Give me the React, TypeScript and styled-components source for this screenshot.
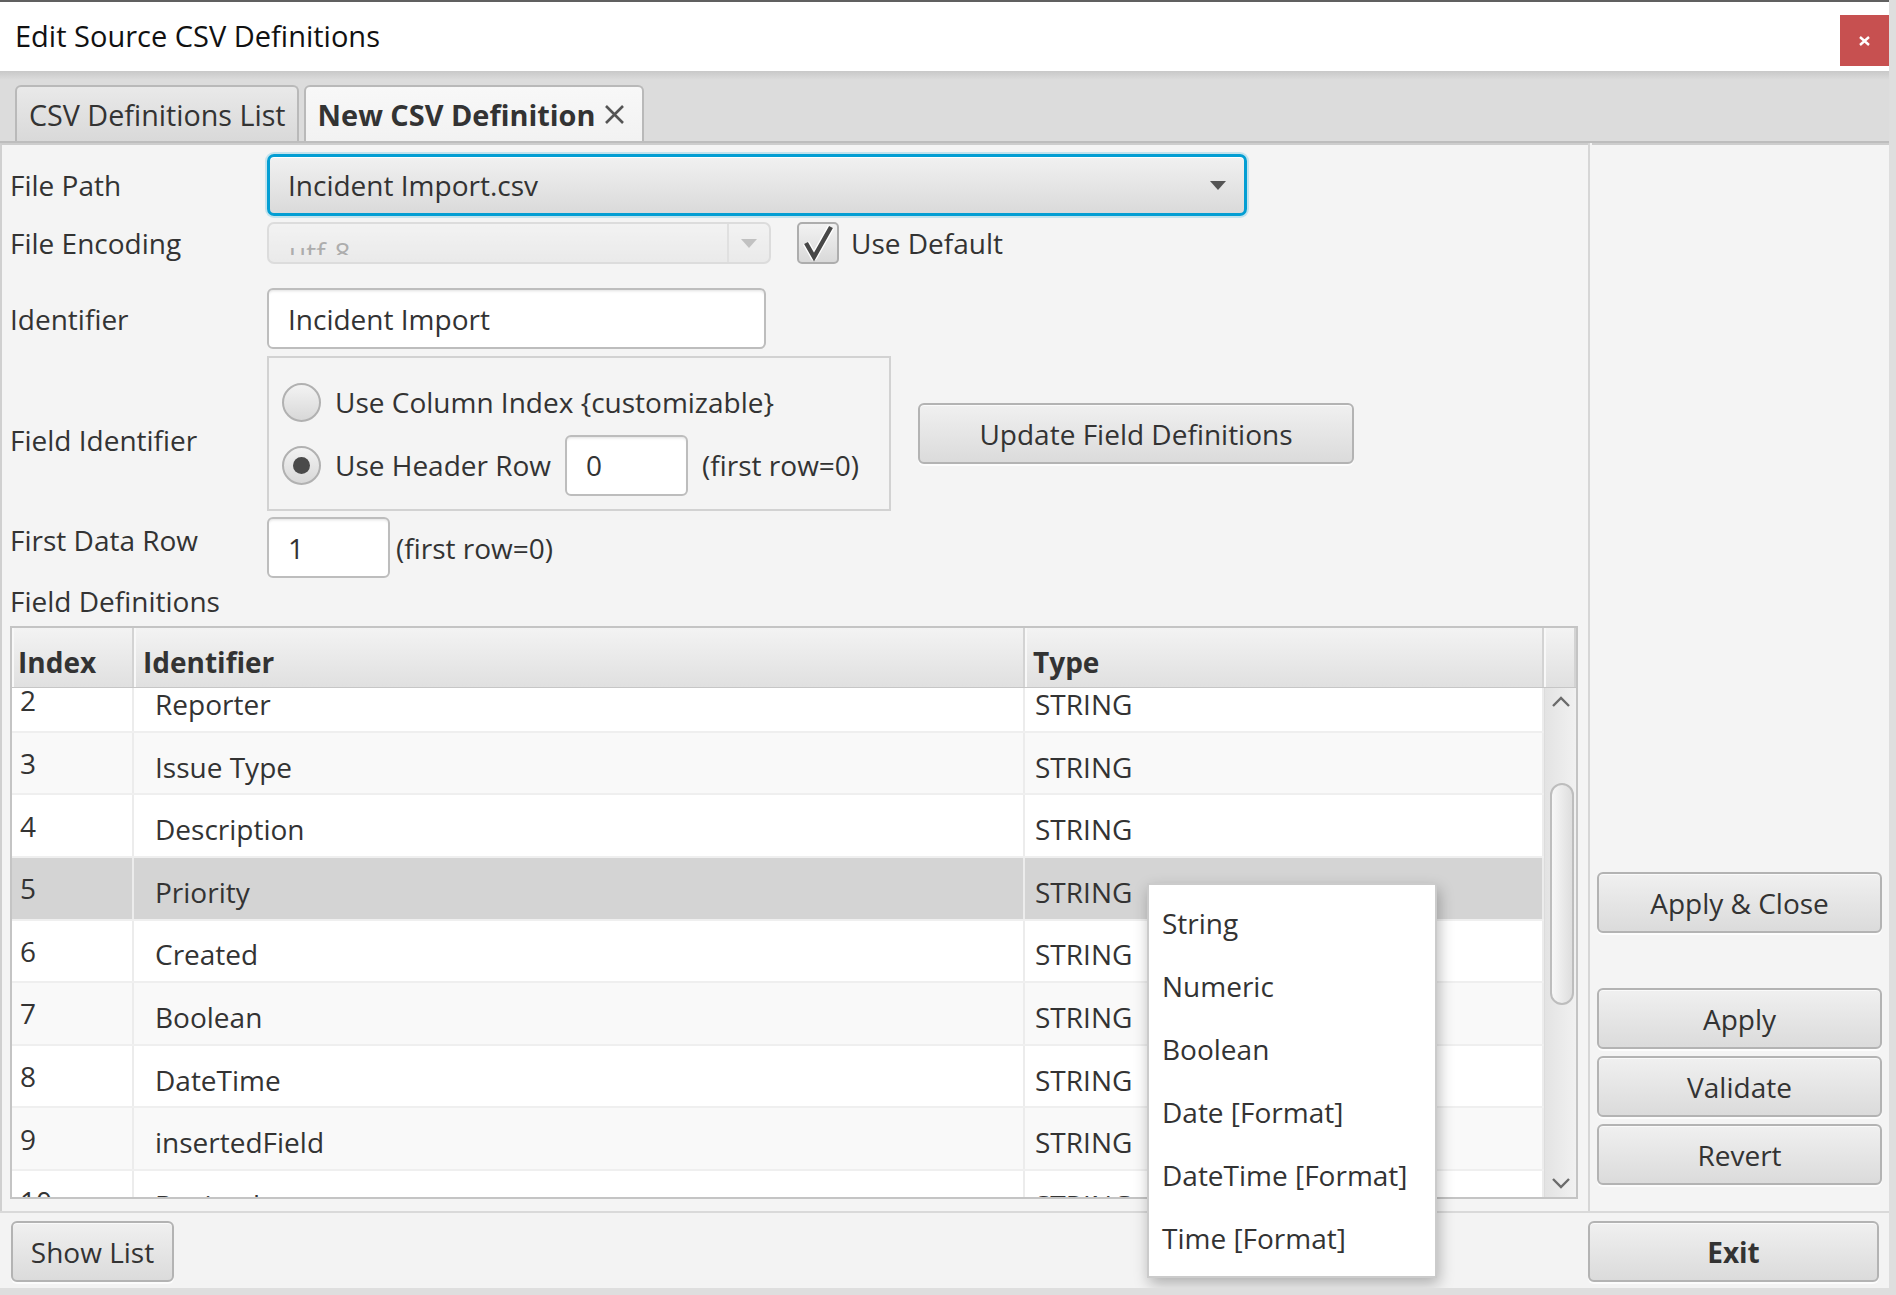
import React, { useLayoutEffect, useRef } from "react";
import styled, { createGlobalStyle } from "styled-components";

const GlobalStyle = createGlobalStyle`
  html, body {
    margin: 0;
    padding: 0;
    background: #dedede;
  }
  body {
    font-family: "Open Sans", "Noto Sans", "Liberation Sans", sans-serif;
    font-size: 28px;
    color: #333;
  }
  * {
    box-sizing: border-box;
  }
`;

const ROW_H = 62.6;
const SCROLL_TOP = 143;
const VIEWPORT_H = 510;
const ARROW_H = 28;

const fields = [
  "Issue key",
  "Summary",
  "Reporter",
  "Issue Type",
  "Description",
  "Priority",
  "Created",
  "Boolean",
  "DateTime",
  "insertedField",
  "Decimal",
  "Integer",
  "Assignee",
  "Status",
  "Resolution",
  "Updated",
  "Labels",
];

const typeOptions = [
  "String",
  "Numeric",
  "Boolean",
  "Date [Format]",
  "DateTime [Format]",
  "Time [Format]",
];

const Window = styled.div`
  position: relative;
  width: 1889px;
  height: 1288px;
  display: flex;
  flex-direction: column;
  background: #f4f4f4;
  border-top: 2px solid #606060;
  overflow: hidden;
`;

// window chrome
const TitleBar = styled.div`
  flex: none;
  height: 69px;
  display: flex;
  justify-content: space-between;
  align-items: flex-start;
  background: #fff;
  padding-left: 15px;
`;

const Title = styled.div`
  margin-top: 15px;
  font-size: 29px;
  line-height: 38px;
  color: #111;
`;

const CloseButton = styled.div`
  width: 49px;
  height: 51px;
  margin-top: 13px;
  background: #c75050;
  display: flex;
  align-items: center;
  justify-content: center;
`;

const TabHeader = styled.div`
  flex: none;
  height: 72px;
  display: flex;
  align-items: flex-end;
  gap: 5px;
  padding-left: 15px;
  background: linear-gradient(#c8c8c8, #dcdcdc 9px);
  border-bottom: 2px solid #bdbdbd;
`;

const Tab = styled.div<{ $active?: boolean }>`
  height: 56px;
  display: flex;
  align-items: center;
  gap: 9px;
  padding: 0 ${(p) => (p.$active ? 17 : 11)}px 0 12px;
  border: 2px solid #b9b9b9;
  border-bottom: none;
  border-radius: 6px 6px 0 0;
  background: ${(p) =>
    p.$active
      ? "linear-gradient(#f8f8f8, #f2f2f2)"
      : "linear-gradient(#e9e9e9, #d9d9d9)"};
  font-size: ${(p) => (p.$active ? 28.9 : 28.7)}px;
  font-weight: ${(p) => (p.$active ? 700 : 400)};
  white-space: nowrap;
`;

// split pane
const Main = styled.div`
  flex: 1;
  min-height: 0;
  display: flex;
`;

const LeftPane = styled.div`
  flex: none;
  width: 1588px;
  display: flex;
  flex-direction: column;
  padding-left: 8px;
  border-top: 2px solid #cdcdcd;
  border-left: 2px solid #d0d0d0;
`;

const Divider = styled.div`
  flex: none;
  width: 4px;
  border-left: 2px solid #d6d6d6;
`;

const RightPane = styled.div`
  flex: 1;
  display: flex;
  flex-direction: column;
  justify-content: flex-end;
  gap: 7px;
  padding: 0 7px 26px 5px;
  border-top: 2px solid #cdcdcd;
`;

// form
const FormRow = styled.div<{ $top: number; $height: number }>`
  display: grid;
  grid-template-columns: 257px 1fr;
  align-items: center;
  margin-top: ${(p) => p.$top}px;
  height: ${(p) => p.$height}px;
`;

const Label = styled.div<{ $nudge?: number }>`
  line-height: 38px;
  white-space: nowrap;
  padding-top: ${(p) => Math.max(p.$nudge ?? 0, 0)}px;
  padding-bottom: ${(p) => Math.max(-(p.$nudge ?? 0), 0)}px;
`;

const Controls = styled.div<{ $gap?: number }>`
  display: flex;
  align-items: center;
  gap: ${(p) => p.$gap ?? 12}px;
  height: 100%;
`;

const Text = styled.span`
  line-height: 38px;
  white-space: nowrap;
`;

const FocusCombo = styled.div`
  width: 980px;
  height: 62px;
  display: flex;
  align-items: center;
  justify-content: space-between;
  padding: 0 18px;
  border: 3px solid #039ed3;
  border-radius: 7px;
  background: linear-gradient(#f1f1f1, #dadada);
  box-shadow: 0 0 0 2px rgba(3, 158, 211, 0.2), inset 0 1px 0 #fff;
`;

const DisabledCombo = styled.div`
  width: 504px;
  height: 42px;
  display: flex;
  border: 2px solid #b9b9b9;
  border-radius: 7px;
  background: linear-gradient(#f1f1f1, #dcdcdc);
  opacity: 0.4;
  overflow: hidden;
`;

// the squeezed combo only shows the top of its value
const ComboValueClip = styled.div`
  flex: 1;
  height: 31px;
  overflow: hidden;
  padding: 9px 0 0 20px;
  line-height: 38px;
  color: #444;
`;

const ComboArrowBox = styled.div`
  width: 42px;
  display: flex;
  align-items: center;
  justify-content: center;
  border-left: 2px solid #c4c4c4;
`;

const CheckBox = styled.div`
  width: 42px;
  height: 42px;
  margin-left: 14px;
  border: 2px solid #adadad;
  border-radius: 5px;
  background: linear-gradient(#f2f2f2, #d9d9d9);
  display: flex;
  align-items: center;
  justify-content: center;
`;

const TextField = styled.div<{ $width: number }>`
  width: ${(p) => p.$width}px;
  height: 61px;
  display: flex;
  align-items: center;
  padding-left: 19px;
  border: 2px solid #bdbdbd;
  border-radius: 6px;
  background: #fff;
  box-shadow: inset 0 3px 3px -2px rgba(0, 0, 0, 0.12);
  line-height: 38px;
  white-space: nowrap;
`;

const GroupBox = styled.div`
  width: 624px;
  height: 155px;
  display: flex;
  flex-direction: column;
  gap: 12px;
  padding: 24px 0 0 13px;
  border: 2px solid #d2d2d2;
`;

const RadioRow = styled.div<{ $height: number }>`
  height: ${(p) => p.$height}px;
  display: flex;
  align-items: center;
  gap: 14px;
`;

const Radio = styled.div`
  width: 39px;
  height: 39px;
  flex: none;
  border: 2px solid #b1b1b1;
  border-radius: 50%;
  background: linear-gradient(#f3f3f3, #d8d8d8);
  display: flex;
  align-items: center;
  justify-content: center;
`;

const RadioDot = styled.div`
  width: 17px;
  height: 17px;
  border-radius: 50%;
  background: #4a4a4a;
`;

const Button = styled.button<{ $width?: number; $bold?: boolean }>`
  width: ${(p) => (p.$width ? `${p.$width}px` : "auto")};
  height: 61px;
  flex: none;
  padding: 0;
  font-family: inherit;
  font-size: 28px;
  font-weight: ${(p) => (p.$bold ? 700 : 400)};
  color: #333;
  border: 2px solid #b3b3b3;
  border-radius: 6px;
  background: linear-gradient(#f0f0f0, #dbdbdb);
  box-shadow: inset 0 1px 0 #fafafa, 0 2px 0 rgba(255, 255, 255, 0.7);
`;

// table
const Table = styled.div`
  margin-top: 6px;
  width: 1568px;
  height: 573px;
  display: flex;
  flex-direction: column;
  border: 2px solid #c4c4c4;
  background: #fff;
`;

const HeaderRow = styled.div`
  flex: none;
  height: 60px;
  display: grid;
  grid-template-columns: 122px 891px 519px 1fr;
  border-bottom: 1px solid #c6c6c6;
`;

const HeaderCell = styled.div<{ $pad: number }>`
  display: flex;
  align-items: center;
  padding: 8px 0 0 ${(p) => p.$pad}px;
  font-weight: 700;
  background: linear-gradient(#f3f3f3, #e0e0e0);
  border-right: 2px solid #d3d3d3;
  box-shadow: inset 2px 0 0 #f8f8f8;
`;

const TableBody = styled.div`
  flex: 1;
  min-height: 0;
  display: flex;
`;

const Viewport = styled.div`
  flex: 1;
  overflow: hidden;
`;

const Row = styled.div<{ $odd: boolean; $selected: boolean }>`
  height: ${ROW_H}px;
  display: grid;
  grid-template-columns: 122px 891px 1fr;
  border-bottom: 2px solid #efefef;
  background: ${(p) => (p.$selected ? "#d4d4d4" : p.$odd ? "#f9f9f9" : "#fff")};
`;

const Cell = styled.div<{ $pad: number; $drop?: number }>`
  display: flex;
  align-items: center;
  padding-left: ${(p) => p.$pad}px;
  padding-top: ${(p) => p.$drop ?? 0}px;
  border-right: 2px solid #ececec;
  white-space: nowrap;
  overflow: hidden;
`;

const ScrollBar = styled.div`
  flex: none;
  width: 32px;
  display: flex;
  flex-direction: column;
  background: linear-gradient(90deg, #e3e3e3, #f1f1f1);
  border-left: 1px solid #dcdcdc;
`;

const ArrowZone = styled.div`
  height: ${ARROW_H}px;
  display: flex;
  align-items: center;
  justify-content: center;
`;

const Track = styled.div`
  flex: 1;
`;

const Thumb = styled.div`
  width: 24px;
  margin-left: 5px;
  border: 2px solid #bdbdbd;
  border-radius: 12px;
  background: linear-gradient(90deg, #f7f7f7, #dedede);
`;

// context menu for the Type column
const Popup = styled.div`
  position: absolute;
  left: 1147px;
  top: 881px;
  width: 290px;
  height: 395px;
  padding-top: 6px;
  background: #fff;
  border: 2px solid #cbcbcb;
  box-shadow: 2px 6px 14px rgba(0, 0, 0, 0.28);
`;

const MenuItem = styled.div`
  height: 63px;
  display: flex;
  align-items: center;
  padding-left: 13px;
  white-space: nowrap;
`;

const BottomBar = styled.div`
  flex: none;
  height: 77px;
  display: flex;
  justify-content: space-between;
  align-items: flex-start;
  padding: 8px 10px 0 11px;
  border-top: 2px solid #d9d9d9;
  background: #f3f3f3;
`;

const DownTriangle = ({ color }: { color: string }) => (
  <svg width="16" height="9" viewBox="0 0 16 9">
    <path d="M0 0 L16 0 L8 9 Z" fill={color} />
  </svg>
);

const Chevron = ({ up }: { up?: boolean }) => (
  <svg width="20" height="12" viewBox="0 0 20 12">
    <polyline
      points={up ? "2,10 10,2 18,10" : "2,2 10,10 18,2"}
      fill="none"
      stroke="#6b6b6b"
      strokeWidth="2.4"
    />
  </svg>
);

const FieldTable: React.FC = () => {
  const viewportRef = useRef<HTMLDivElement>(null);

  useLayoutEffect(() => {
    if (viewportRef.current) viewportRef.current.scrollTop = SCROLL_TOP;
  }, []);

  const contentH = fields.length * ROW_H;
  const trackH = VIEWPORT_H - ARROW_H * 2;
  const thumbH = (trackH * VIEWPORT_H) / contentH;
  const thumbTop = (SCROLL_TOP / (contentH - VIEWPORT_H)) * (trackH - thumbH);

  return (
    <Table>
      <HeaderRow>
        <HeaderCell $pad={6}>Index</HeaderCell>
        <HeaderCell $pad={9}>Identifier</HeaderCell>
        <HeaderCell $pad={8}>Type</HeaderCell>
        <HeaderCell $pad={0} />
      </HeaderRow>
      <TableBody>
        <Viewport ref={viewportRef}>
          {fields.map((name, i) => (
            <Row key={name} $odd={i % 2 === 1} $selected={i === 5}>
              <Cell $pad={8}>{i}</Cell>
              <Cell $pad={21} $drop={7}>
                {name}
              </Cell>
              <Cell $pad={10} $drop={7}>
                STRING
              </Cell>
            </Row>
          ))}
        </Viewport>
        <ScrollBar>
          <ArrowZone>
            <Chevron up />
          </ArrowZone>
          <Track>
            <Thumb style={{ marginTop: thumbTop + 6, height: thumbH + 4 }} />
          </Track>
          <ArrowZone>
            <Chevron />
          </ArrowZone>
        </ScrollBar>
      </TableBody>
    </Table>
  );
};

const App: React.FC = () => {
  return (
    <>
      <GlobalStyle />
      <Window>
        <TitleBar>
          <Title>Edit Source CSV Definitions</Title>
          <CloseButton>
            <svg width="11" height="10" viewBox="0 0 11 10">
              <path d="M1 1 L10 9 M10 1 L1 9" stroke="#fff" strokeWidth="2.4" />
            </svg>
          </CloseButton>
        </TitleBar>

        <TabHeader>
          <Tab>CSV Definitions List</Tab>
          <Tab $active>
            New CSV Definition
            <svg width="21" height="21" viewBox="0 0 21 21">
              <path d="M2 2 L19 19 M19 2 L2 19" stroke="#555" strokeWidth="2.6" />
            </svg>
          </Tab>
        </TabHeader>

        <Main>
          <LeftPane>
            <FormRow $top={9} $height={62}>
              <Label>File Path</Label>
              <Controls>
                <FocusCombo>
                  <Text>Incident Import.csv</Text>
                  <DownTriangle color="#555" />
                </FocusCombo>
              </Controls>
            </FormRow>

            <FormRow $top={6} $height={42}>
              <Label>File Encoding</Label>
              <Controls>
                <DisabledCombo>
                  <ComboValueClip>utf-8</ComboValueClip>
                  <ComboArrowBox>
                    <DownTriangle color="#777" />
                  </ComboArrowBox>
                </DisabledCombo>
                <CheckBox>
                  <svg width="34" height="38" viewBox="0 0 34 38">
                    <path
                      d="M5 19 L13 33 L30 3"
                      fill="none"
                      stroke="#fff"
                      strokeWidth="7"
                      strokeLinejoin="round"
                    />
                    <path
                      d="M5 19 L13 33 L30 3"
                      fill="none"
                      stroke="#474747"
                      strokeWidth="4.4"
                      strokeLinejoin="miter"
                    />
                  </svg>
                </CheckBox>
                <Text>Use Default</Text>
              </Controls>
            </FormRow>

            <FormRow $top={24} $height={61}>
              <Label>Identifier</Label>
              <Controls>
                <TextField $width={499}>Incident Import</TextField>
              </Controls>
            </FormRow>

            <FormRow $top={7} $height={155}>
              <Label $nudge={12}>Field Identifier</Label>
              <Controls $gap={27}>
                <GroupBox>
                  <RadioRow $height={40}>
                    <Radio />
                    <Text>Use Column Index {"{customizable}"}</Text>
                  </RadioRow>
                  <RadioRow $height={62}>
                    <Radio>
                      <RadioDot />
                    </Radio>
                    <Text>Use Header Row</Text>
                    <TextField $width={123}>0</TextField>
                    <Text>(first row=0)</Text>
                  </RadioRow>
                </GroupBox>
                <Button $width={436}>Update Field Definitions</Button>
              </Controls>
            </FormRow>

            <FormRow $top={6} $height={61}>
              <Label $nudge={-15}>First Data Row</Label>
              <Controls $gap={6}>
                <TextField $width={123}>1</TextField>
                <Text>(first row=0)</Text>
              </Controls>
            </FormRow>

            <FormRow $top={4} $height={38}>
              <Label>Field Definitions</Label>
            </FormRow>

            <FieldTable />
          </LeftPane>

          <Divider />

          <RightPane>
            <Button style={{ marginBottom: 48 }}>Apply &amp; Close</Button>
            <Button>Apply</Button>
            <Button>Validate</Button>
            <Button>Revert</Button>
          </RightPane>
        </Main>

        <BottomBar>
          <Button $width={163}>Show List</Button>
          <Button $width={291} $bold>
            Exit
          </Button>
        </BottomBar>

        <Popup>
          {typeOptions.map((t) => (
            <MenuItem key={t}>{t}</MenuItem>
          ))}
        </Popup>
      </Window>
    </>
  );
};

export default App;
